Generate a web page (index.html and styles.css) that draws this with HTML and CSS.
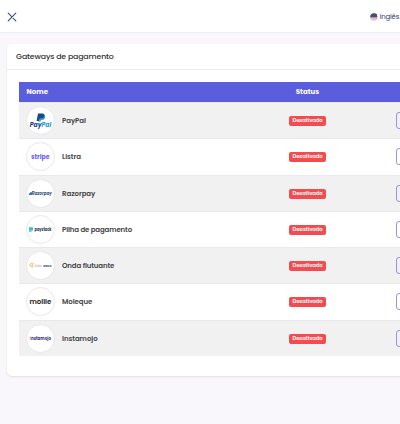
FILE: index.html
```html
<!DOCTYPE html>
<html lang="pt">
<head>
    <meta charset="UTF-8">
    <meta name="viewport" content="width=device-width, initial-scale=1.0">
    <title>Gateways de pagamento</title>
    <link rel="stylesheet" href="styles.css">
</head>
<body>
<header class="topbar">
    <svg class="close-icon" viewBox="0 0 10 10"><path d="M1.2 1.2L8.8 8.8M8.8 1.2L1.2 8.8"/></svg>
    <div class="language">
        <svg class="flag" viewBox="0 0 8 8">
            <defs><clipPath id="round"><circle cx="4" cy="4" r="3.8"/></clipPath></defs>
            <g clip-path="url(#round)">
                <rect width="8" height="8" fill="#f7dfe3"/>
                <path d="M0 5.2H8M0 7H8M4 1.5H8M4 3.3H8" stroke="#e29aa2" stroke-width=".9"/>
                <rect width="7" height="4.4" fill="#3d4f80"/>
            </g>
        </svg>
        <span>Inglês</span>
    </div>
</header>

<main class="card">
    <h1 class="card-title">Gateways de pagamento</h1>
    <div class="card-body">
        <table class="gateways">
            <thead>
                <tr>
                    <th class="col-name"><span class="head-name">Nome</span></th>
                    <th class="col-status">Status</th>
                    <th class="col-action"></th>
                </tr>
            </thead>
            <tbody>
                <tr>
                    <td><div class="gateway">
                        <svg class="logo" viewBox="0.5 0.5 27 27">
                            <path d="M11.5 7h4.2c2 0 2.8 1.2 2.3 3-.5 1.7-1.7 2.3-3.5 2.3h-1.2l-.5 2.3h-2.7z" fill="#174a8c"/>
                            <path d="M17.9 8.8c.8.6.9 1.4.6 2.4-.5 1.6-1.6 2.2-3.2 2.2h-.9l-.5 1.9h-2l.2-.8h.8l.5-2.2h1.2c1.8 0 3.1-.7 3.3-3.5z" fill="#24a0dc"/>
                            <text class="italic" x="3.2" y="20.2" font-size="6.3" textLength="21.6" lengthAdjust="spacingAndGlyphs" fill="#1c3e86">Pay<tspan fill="#1d9bdc">Pal</tspan></text>
                        </svg>
                        <span class="name">PayPal</span>
                    </div></td>
                    <td class="status"><span class="badge">Desativado</span></td>
                    <td class="action"><button class="edit" aria-label="Editar"></button></td>
                </tr>
                <tr>
                    <td><div class="gateway">
                        <svg class="logo" viewBox="0.5 0.5 27 27">
                            <text x="4.6" y="16.2" font-size="7.2" textLength="18.6" lengthAdjust="spacingAndGlyphs" fill="#6a60fa">stripe</text>
                        </svg>
                        <span class="name">Listra</span>
                    </div></td>
                    <td class="status"><span class="badge">Desativado</span></td>
                    <td class="action"><button class="edit" aria-label="Editar"></button></td>
                </tr>
                <tr>
                    <td><div class="gateway">
                        <svg class="logo" viewBox="0.5 0.5 27 27">
                            <path d="M2.2 15.6l1-2.4 1.5-.8-.3 1.2 1.8-2.2-1 4.2z" fill="#2f6fd0"/>
                            <text class="italic" x="5.2" y="15.5" font-size="4.7" textLength="20.2" lengthAdjust="spacingAndGlyphs" fill="#3a5581">Razorpay</text>
                        </svg>
                        <span class="name">Razorpay</span>
                    </div></td>
                    <td class="status"><span class="badge">Desativado</span></td>
                    <td class="action"><button class="edit" aria-label="Editar"></button></td>
                </tr>
                <tr>
                    <td><div class="gateway">
                        <svg class="logo" viewBox="0.5 0.5 27 27">
                            <path d="M2.5 11.7h4v1h-4zM2.5 12.7h4v1.2h-4zM2.5 14.1h4v1h-4zM2.5 15.3h2.6v.9H2.5z" fill="#35bfe3"/>
                            <text x="8" y="15.3" font-size="4.3" textLength="17" lengthAdjust="spacingAndGlyphs" fill="#1b3659">paystack</text>
                        </svg>
                        <span class="name long">Pilha de pagamento</span>
                    </div></td>
                    <td class="status"><span class="badge">Desativado</span></td>
                    <td class="action"><button class="edit" aria-label="Editar"></button></td>
                </tr>
                <tr>
                    <td><div class="gateway">
                        <svg class="logo" viewBox="0.5 0.5 27 27">
                            <path d="M6.4 12.4c-2-.7-3.5-.2-3.1 1.3.3 1 1.5 1.7 2.9 1.6M6.9 12c-1.7.8-1.8 2.6-.3 3.7" fill="none" stroke="#f8b34d" stroke-width="1"/>
                            <text class="light" x="7.8" y="15.1" font-size="3.4" textLength="7.6" lengthAdjust="spacingAndGlyphs" fill="#a1a2aa">flutter</text>
                            <text x="16.8" y="15.1" font-size="3.6" textLength="8.2" lengthAdjust="spacingAndGlyphs" fill="#50535f">wave</text>
                        </svg>
                        <span class="name long">Onda flutuante</span>
                    </div></td>
                    <td class="status"><span class="badge">Desativado</span></td>
                    <td class="action"><button class="edit" aria-label="Editar"></button></td>
                </tr>
                <tr>
                    <td><div class="gateway">
                        <svg class="logo" viewBox="0.5 0.5 27 27">
                            <text class="medium" x="2.9" y="16.8" font-size="7.3" textLength="22" lengthAdjust="spacingAndGlyphs" fill="#242424">mollie</text>
                        </svg>
                        <span class="name">Moleque</span>
                    </div></td>
                    <td class="status"><span class="badge">Desativado</span></td>
                    <td class="action"><button class="edit" aria-label="Editar"></button></td>
                </tr>
                <tr>
                    <td><div class="gateway">
                        <svg class="logo" viewBox="0.5 0.5 27 27">
                            <text x="3.3" y="15.3" font-size="4.2" textLength="21.2" lengthAdjust="spacingAndGlyphs" fill="#35318c"><tspan fill="#ef7b67">i</tspan>nstamojo</text>
                        </svg>
                        <span class="name">Instamojo</span>
                    </div></td>
                    <td class="status"><span class="badge">Desativado</span></td>
                    <td class="action"><button class="edit" aria-label="Editar"></button></td>
                </tr>
            </tbody>
        </table>
    </div>
</main>
</body>
</html>
```
FILE: styles.css
```css
* {
    box-sizing: border-box;
}

body {
    margin: 0;
    height: 424px;
    overflow: hidden;
    background-color: #f9f7fb;
    font-family: Poppins, Inter, "Liberation Sans", sans-serif;
    color: #444447;
}

.topbar {
    display: flex;
    align-items: center;
    justify-content: space-between;
    height: 33px;
    padding: 1px 0.8px 0 7px;
    background-color: #fff;
    border-bottom: 1px solid #e9eef2;
}

.close-icon {
    width: 10px;
    height: 10px;
    fill: none;
    stroke: #40548c;
    stroke-width: 1.2;
    stroke-linecap: round;
}

.language {
    display: flex;
    align-items: center;
    gap: 1.5px;
    font-size: 6.9px;
    letter-spacing: -0.15px;
    color: #303463;
}

.flag {
    width: 8px;
    height: 8px;
}

.card {
    width: 393px;
    height: 332px;
    margin: 11px 0 0 7px;
    background-color: #fff;
    border-radius: 5px 0 0 5px;
    box-shadow: 0 1px 2px rgba(60, 60, 80, 0.12);
}

.card-title {
    height: 26px;
    margin: 0;
    padding: 1px 0 0 9px;
    border-bottom: 1px solid #eeeff1;
    font-size: 7.8px;
    font-weight: 500;
    line-height: 24px;
    letter-spacing: -0.14px;
    color: #303033;
}

.card-body {
    padding: 12px 0 12px 12px;
    overflow: hidden;
}

/* The table runs past the right edge of the window */
.gateways {
    width: 426px;
    table-layout: fixed;
    border-collapse: separate;
    border-spacing: 0;
}

th {
    height: 20px;
    padding: 0 0 1px;
    background-color: #5a5edc;
    font-size: 7px;
    font-weight: 700;
    line-height: 18px;
    color: #fff;
}

.col-name {
    width: 250px;
    text-align: left;
}

.head-name {
    padding-left: 7.5px;
}

.col-status {
    width: 77px;
}

td {
    height: 36.25px;
    padding: 0;
    border-top: 1px solid #e9e9ea;
}

tbody tr:nth-child(odd) td {
    background-color: #f1f1f1;
}

.gateway {
    display: flex;
    align-items: center;
    gap: 7px;
    padding-left: 7px;
}

.logo {
    width: 29px;
    height: 29px;
    background-color: #fff;
    border: 1px solid #e8e8ec;
    border-radius: 50%;
    font-weight: 700;
}

.italic {
    font-style: italic;
}

.medium {
    font-weight: 600;
}

.light {
    font-weight: 400;
}

.name {
    padding-top: 1px;
    font-size: 7px;
    font-weight: 600;
    letter-spacing: -0.05px;
    white-space: nowrap;
}

.long {
    letter-spacing: -0.13px;
}

.status {
    padding-top: 1px;
    text-align: center;
    font-size: 7px;
    line-height: 10px;
}

.badge {
    display: inline-block;
    width: 37px;
    height: 10px;
    border-radius: 2px;
    background-color: #f24c50;
    font-size: 5.2px;
    font-weight: 600;
    line-height: 10px;
    color: #fff;
    vertical-align: middle;
}

.action {
    padding-left: 50.4px;
}

.edit {
    display: block;
    width: 17px;
    height: 17px;
    padding: 0;
    border: 1px solid #9294ee;
    border-radius: 3px;
    background-color: transparent;
}
```
